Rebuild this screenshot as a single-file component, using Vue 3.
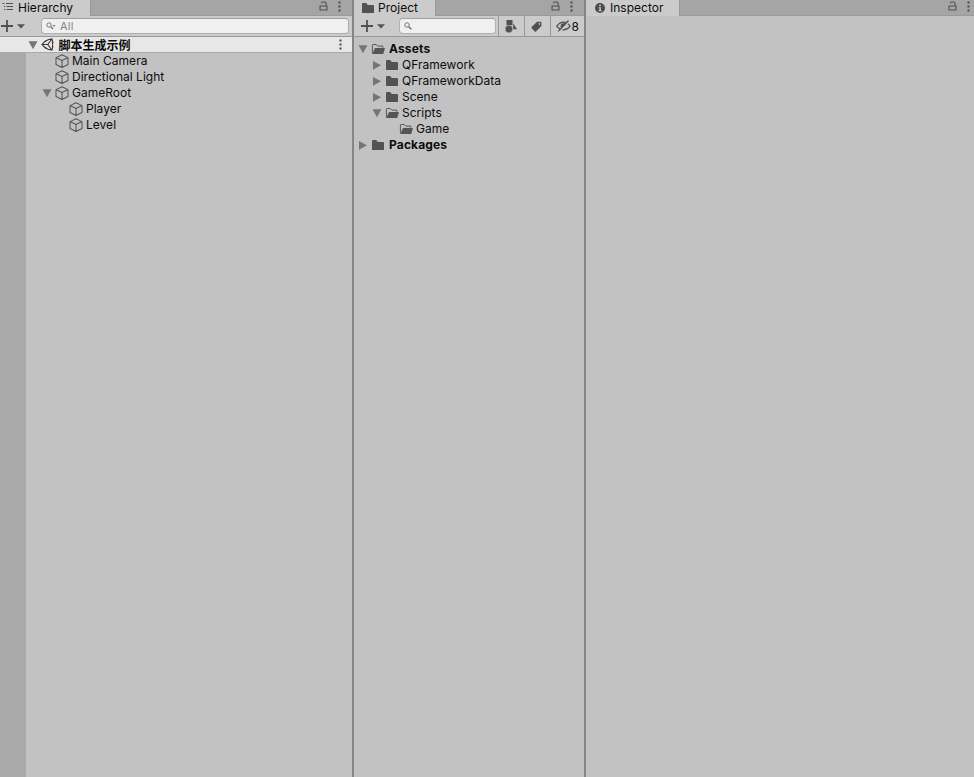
<script setup>
const hierarchy = [
  { name: 'Main Camera', depth: 1 },
  { name: 'Directional Light', depth: 1 },
  { name: 'GameRoot', depth: 1, open: true },
  { name: 'Player', depth: 2 },
  { name: 'Level', depth: 2 },
]

const folders = [
  { name: 'Assets', depth: 0, fold: 'down', icon: 'folder-open', bold: true },
  { name: 'QFramework', depth: 1, fold: 'right', icon: 'folder' },
  { name: 'QFrameworkData', depth: 1, fold: 'right', icon: 'folder' },
  { name: 'Scene', depth: 1, fold: 'right', icon: 'folder' },
  { name: 'Scripts', depth: 1, fold: 'down', icon: 'folder-open' },
  { name: 'Game', depth: 2, icon: 'folder-open' },
  { name: 'Packages', depth: 0, fold: 'right', icon: 'folder', bold: true },
]
</script>

<template>
  <div class="editor">
    <svg class="defs" width="0" height="0">
      <symbol id="list" viewBox="0 0 12 10">
        <path d="M.5 1.5h2M4 1.5h7M2 4.5h1.2M4.5 4.5H11M2 7.5h1.2M4.5 7.5H11" stroke="#505050" stroke-width="1.2" fill="none" />
      </symbol>
      <symbol id="lock" viewBox="0 0 9 10">
        <path d="M1 5h7v4H1zM2.5 2.2Q2.5 1 3.6 1h2.3Q7 1 7 2.2V5" stroke="#505050" stroke-width="1.1" fill="none" />
      </symbol>
      <symbol id="dots" viewBox="0 0 3 11">
        <path d="M.5.5h2v2h-2zM.5 4.5h2v2h-2zM.5 8.5h2v2h-2z" fill="#484848" />
      </symbol>
      <symbol id="plus" viewBox="0 0 12 12">
        <path d="M6 0v12M0 6h12" stroke="#505050" stroke-width="1.8" />
      </symbol>
      <symbol id="caret" viewBox="0 0 8 5">
        <path d="M0 .3h8L4 4.6z" fill="#555" />
      </symbol>
      <symbol id="search" viewBox="0 0 11 8">
        <path d="M4.7 4.7L7.4 7.3" stroke="#666" stroke-width="1.2" />
        <circle cx="3" cy="3" r="2.2" stroke="#777" fill="none" />
      </symbol>
      <symbol id="search-menu" viewBox="0 0 11 8">
        <path d="M4.7 4.7L7 7" stroke="#666" stroke-width="1.2" />
        <circle cx="3" cy="3" r="2.2" stroke="#777" fill="none" />
        <path d="M6.4 3.2h3.2L8 4.8z" fill="#555" />
      </symbol>
      <symbol id="down" viewBox="0 0 10 10">
        <path d="M.5 1.2h9L5 9.2z" fill="#757575" />
      </symbol>
      <symbol id="right" viewBox="0 0 10 10">
        <path d="M1 .9v8.8l8-4.4z" fill="#757575" />
      </symbol>
      <symbol id="cube" viewBox="0 0 14 14">
        <path d="M7 .7l6 2.9v7L7 13.4 1 10.6v-7zM1 3.6l6 2.8 6-2.8M7 6.4v7" stroke="#555" stroke-width="1.05" fill="none" stroke-linejoin="round" />
      </symbol>
      <symbol id="unity" viewBox="0 0 13 13">
        <path d="M4.6 2.6L1 6.5l3.6 3.9M3.4 3.9L7 1.8l3.9-.9 1.1 4M3.4 9.1L7 11.2l3.9.9 1.1-4M11.3 3.5q.9 3 0 6M1.2 6.5h5.6M6.8 6.5l3.6-5M6.8 6.5l3.6 5" stroke="#363636" stroke-width="1.1" fill="none" />
      </symbol>
      <symbol id="folder" viewBox="0 0 14 10">
        <path d="M1 1q0-1 1-1h3.2l1.6 1.9H12q1 0 1 1V10H1z" fill="#525252" />
      </symbol>
      <symbol id="folder-open" viewBox="0 0 14 10">
        <path d="M1.4 9.3V1.2q0-.7.7-.7h3.1l1.5 1.6h5.1v1.7" stroke="#555" fill="none" />
        <path d="M4 4h10l-1.8 6H1.3z" fill="#555" />
      </symbol>
      <symbol id="shapes" viewBox="0 0 12 13">
        <path d="M1.5 0h6v5.2h-6zM8.2 3.2L12 9.2H8.2z" fill="#505050" />
        <circle cx="3.9" cy="9" r="3.7" fill="#505050" stroke="#cbcbcb" stroke-width=".4" />
      </symbol>
      <symbol id="tag" viewBox="0 0 11 11">
        <path fill-rule="evenodd" d="M6 .7h3.6q.8 0 .8.8V5L5 10.4Q4.4 11 3.8 10.4L.7 7.3Q.1 6.7.7 6.1zM8.3 2.1a.8.8 0 1 0 .01 0z" fill="#505050" />
      </symbol>
      <symbol id="hidden" viewBox="0 0 15 12">
        <path d="M.8 6.2Q3.8 2.2 7.5 2.2q3.7 0 6.7 4-3 3.7-6.7 3.7-3.7 0-6.7-3.7z" stroke="#505050" stroke-width="1.3" fill="none" />
        <path d="M5.2 8.8Q3.2 4 7.4 3.1q2.4.1 2.8 1.7z" fill="#505050" />
        <path d="M13.4 1.2L3.4 11.8" stroke="#cbcbcb" stroke-width="1.3" />
        <path d="M12.5.5L2.2 11.4" stroke="#505050" stroke-width="1.3" />
      </symbol>
      <symbol id="info" viewBox="0 0 10 10">
        <circle cx="5" cy="5" r="5" fill="#4c4c4c" />
        <path d="M4.2 1.8h1.6v1.4H4.2zM3.8 4.2h2v3h.8v1H3.6v-1h.8v-2h-.6z" fill="#d0d0d0" />
      </symbol>
    </svg>

    <section class="pane hierarchy">
      <header class="tabs">
        <div class="tab">
          <svg class="i-list"><use href="#list" /></svg>
          <span>Hierarchy</span>
        </div>
        <div class="actions">
          <svg class="i-lock"><use href="#lock" /></svg>
          <svg class="i-dots"><use href="#dots" /></svg>
        </div>
      </header>
      <div class="toolbar">
        <svg class="i-plus"><use href="#plus" /></svg>
        <svg class="i-caret"><use href="#caret" /></svg>
        <div class="search">
          <svg class="i-search"><use href="#search-menu" /></svg>
          <span>All</span>
        </div>
      </div>
      <div class="scene">
        <svg class="fold"><use href="#down" /></svg>
        <svg class="i-unity"><use href="#unity" /></svg>
        <span class="scene-name">脚本生成示例</span>
        <svg class="i-dots"><use href="#dots" /></svg>
      </div>
      <div class="hierarchy-body">
        <div class="gutter"></div>
        <div class="objects">
          <div v-for="item in hierarchy" :key="item.name" class="row" :class="'depth-' + item.depth">
            <svg class="fold"><use v-if="item.open" href="#down" /></svg>
            <svg class="i-cube"><use href="#cube" /></svg>
            <span>{{ item.name }}</span>
          </div>
        </div>
      </div>
    </section>

    <section class="pane project">
      <header class="tabs">
        <div class="tab">
          <svg class="i-folder"><use href="#folder" /></svg>
          <span>Project</span>
        </div>
        <div class="actions">
          <svg class="i-lock"><use href="#lock" /></svg>
          <svg class="i-dots"><use href="#dots" /></svg>
        </div>
      </header>
      <div class="toolbar">
        <svg class="i-plus"><use href="#plus" /></svg>
        <svg class="i-caret"><use href="#caret" /></svg>
        <div class="search">
          <svg class="i-search"><use href="#search" /></svg>
        </div>
        <div class="tool shapes"><svg class="i-shapes"><use href="#shapes" /></svg></div>
        <div class="tool tag"><svg class="i-tag"><use href="#tag" /></svg></div>
        <div class="tool hidden"><svg class="i-hidden"><use href="#hidden" /></svg><span>8</span></div>
      </div>
      <div class="folders">
        <div v-for="item in folders" :key="item.name" class="row" :class="['depth-' + item.depth, { bold: item.bold }]">
          <svg class="fold"><use v-if="item.fold" :href="'#' + item.fold" /></svg>
          <svg class="i-folder"><use :href="'#' + item.icon" /></svg>
          <span>{{ item.name }}</span>
        </div>
      </div>
    </section>

    <section class="pane inspector">
      <header class="tabs">
        <div class="tab">
          <svg class="i-info"><use href="#info" /></svg>
          <span>Inspector</span>
        </div>
        <div class="actions">
          <svg class="i-lock"><use href="#lock" /></svg>
          <svg class="i-dots"><use href="#dots" /></svg>
        </div>
      </header>
    </section>
  </div>
</template>

<style>
body {
  margin: 0;
  overflow: hidden;
}
</style>

<style scoped>
.editor {
  display: grid;
  grid-template-columns: 352px 230px 388px;
  column-gap: 2px;
  width: 974px;
  height: 777px;
  background: #858585;
  color: #0c0c0c;
  font: 12px/16px Inter, "Noto Sans CJK SC", sans-serif;
  letter-spacing: 0.02px;
  white-space: nowrap;
}
svg {
  display: block;
  flex: none;
}
.defs {
  position: absolute;
}
.pane {
  display: flex;
  flex-direction: column;
  min-width: 0;
  background: #c2c2c2;
}
.tabs {
  display: flex;
  justify-content: space-between;
  height: 16px;
  box-sizing: border-box;
  background: #a5a5a5;
  box-shadow: inset 0 -1px #999;
}
.tab {
  display: flex;
  align-items: center;
  box-sizing: border-box;
  height: 16px;
  background: #cbcbcb;
  border-right: 1px solid #999;
}
.hierarchy .tab { width: 91px; padding-left: 2px; gap: 4px; }
.hierarchy .i-list { margin-top: -2px; }
.project .tab { width: 82px; padding-left: 7px; gap: 3px; }
.inspector .tab { width: 94px; padding-left: 9px; gap: 5px; }
.inspector .i-info { margin-top: -1px; }
.actions {
  display: flex;
  gap: 10px;
  padding: 1px 11.5px 0 0;
}
.inspector .actions { padding-right: 4.5px; }
.toolbar {
  display: flex;
  align-items: center;
  box-sizing: border-box;
  height: 21px;
  background: #cbcbcb;
  border-bottom: 1px solid #999;
}
.hierarchy .toolbar { padding: 0 3px 0 1px; }
.project .toolbar { padding-left: 7px; }
.search {
  display: flex;
  align-items: center;
  box-sizing: border-box;
  height: 16px;
  background: #f0f0f0;
  border: 1px solid #b0b0b0;
  border-top-color: #a0a0a0;
  border-radius: 4px;
  color: #848484;
  font-size: 11px;
  padding-left: 4px;
  gap: 3px;
}
.search span {
  letter-spacing: 0.2px;
}
.hierarchy .search { flex: 1; margin-left: 16px; }
.project .search { width: 97px; margin: 0 2px 0 14px; }
.tool {
  display: flex;
  align-items: center;
  box-sizing: border-box;
  height: 20px;
  border-left: 1px solid #999;
}
.shapes { width: 26px; padding-left: 6px; }
.tag { width: 26px; padding-left: 6px; }
.hidden { width: 34px; padding-left: 5px; gap: 0.5px; }
.hidden span { margin-top: 1px; }
.scene {
  display: flex;
  align-items: center;
  box-sizing: border-box;
  height: 16px;
  padding: 0 10.5px 0 27.5px;
  background: #e7e7e7;
  border-bottom: 1px solid #aaa;
}
.scene-name {
  flex: 1;
  margin-left: 5px;
  padding-top: 1px;
  font-weight: 700;
  letter-spacing: 0;
  line-height: 15px;
}
.hierarchy-body {
  display: flex;
  flex: 1;
}
.gutter {
  width: 26px;
  background: #aaa;
}
.row {
  display: flex;
  align-items: center;
  height: 16px;
}
.objects .row.depth-1 { padding-left: 15.5px; }
.objects .row.depth-2 { padding-left: 29.5px; }
.objects .row span { margin-left: 3px; }
.folders { padding-top: 4px; }
.folders .row.depth-0 { padding-left: 4px; }
.folders .row.depth-1 { padding-left: 18px; }
.folders .row.depth-2 { padding-left: 32px; }
.folders .fold { margin-right: 3px; }
.folders .row span { margin-left: 3px; }
.bold { font-weight: 700; letter-spacing: 0.15px; }
.folders .bold span { margin-left: 4px; }
.fold { width: 10px; height: 10px; }
.objects .fold { margin-right: 3.5px; }
.scene .fold { margin-right: 3px; }
.i-list { width: 12px; height: 10px; }
.i-lock { width: 9px; height: 10px; }
.i-dots { width: 3px; height: 11px; }
.i-plus { width: 12px; height: 12px; }
.i-caret { width: 8px; height: 5px; margin-left: 4px; }
.i-search { width: 11px; height: 8px; }
.i-cube { width: 14px; height: 14px; }
.i-unity { width: 13px; height: 13px; }
.i-folder { width: 14px; height: 10px; }
.i-shapes { width: 12px; height: 13px; }
.i-tag { width: 11px; height: 11px; }
.i-hidden { width: 15px; height: 12px; }
.i-info { width: 10px; height: 10px; }
</style>
